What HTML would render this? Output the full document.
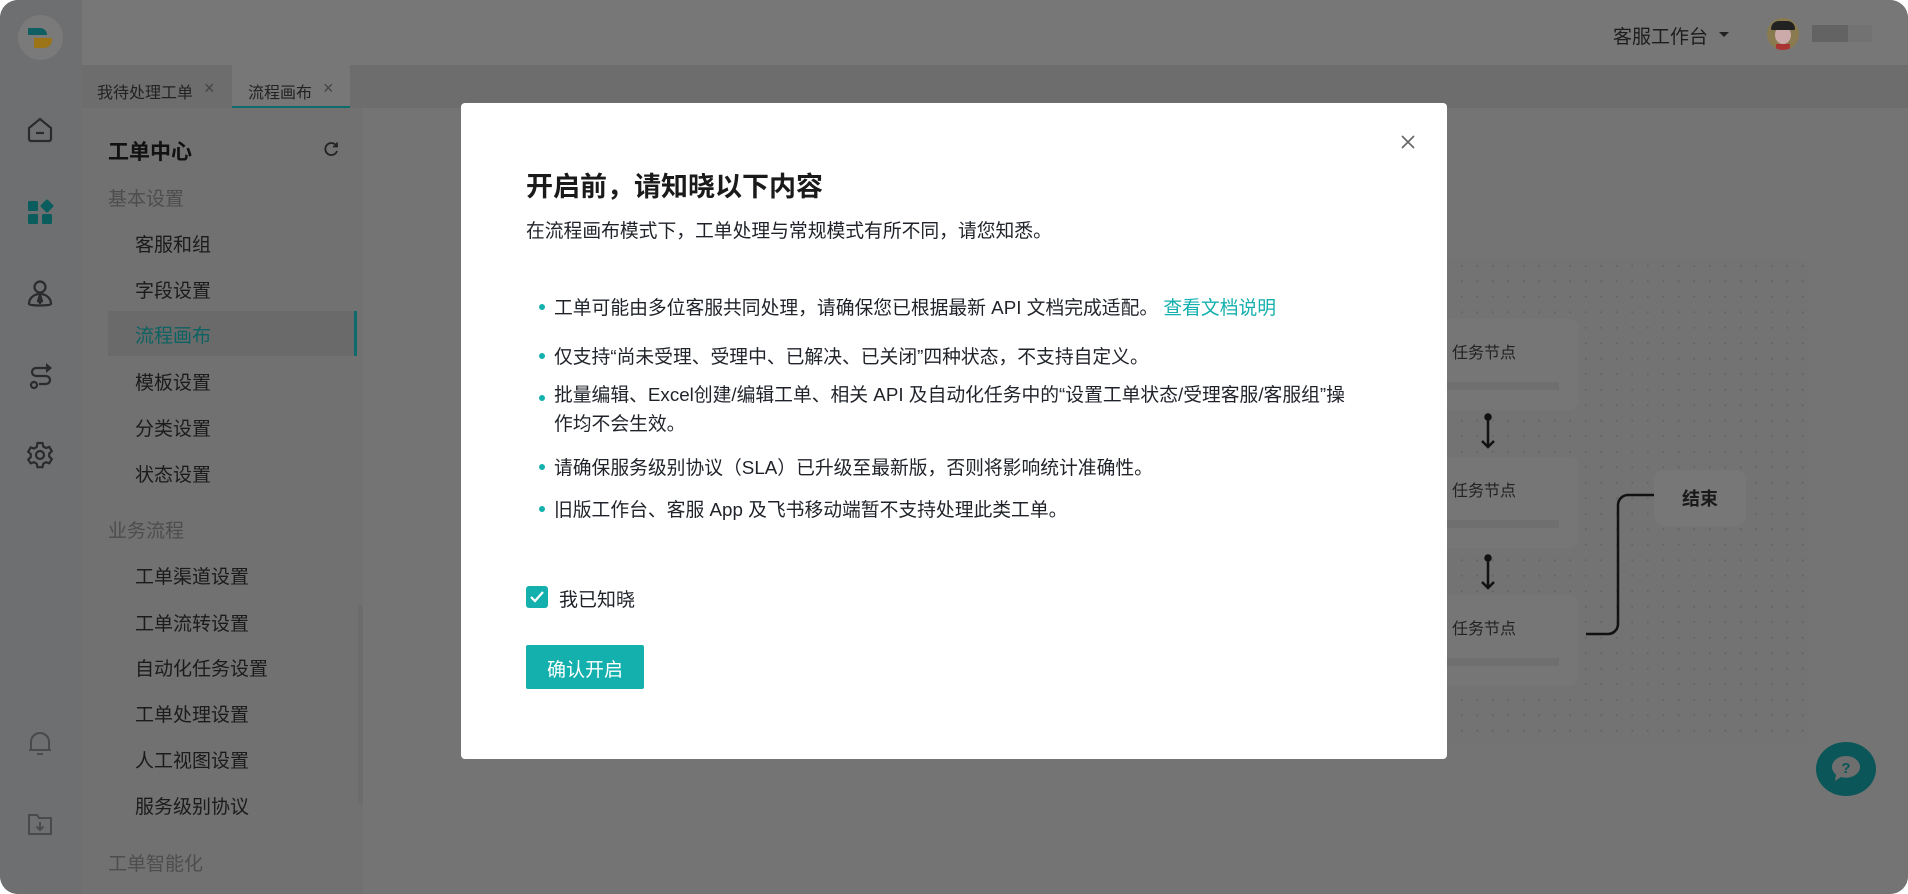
<!DOCTYPE html>
<html><head><meta charset="utf-8"><style>
*{margin:0;padding:0;box-sizing:border-box}
body{width:1908px;height:894px;overflow:hidden;background:#fff;font-family:"Liberation Sans","Noto Sans CJK SC",sans-serif;position:relative}
.wrap{position:absolute;inset:0;border-radius:18px;overflow:hidden;background:#747474}
.abs{position:absolute}
.rail{left:0;top:0;width:82px;height:894px;background:#6e6f71}
.header{left:82px;top:0;right:0;height:65px;background:#777}
.tabs{left:82px;top:65px;right:0;height:43px;background:#6d6d6d}
.menu{left:82px;top:108px;width:281px;height:786px;background:#717171}
.content{left:363px;top:108px;right:0;bottom:0;background:#747474}
.t{position:absolute;white-space:nowrap;color:#1a1a1a}
.mi{font-size:19px;left:135px;color:#1b1b1b}
.mg{font-size:19px;left:108px;color:#4d4d4d}
.canvas{left:1330px;top:258px;width:479px;height:487px;border-radius:14px;background-color:#737373;background-image:radial-gradient(circle,#656565 0.9px,transparent 1.2px);background-size:15.5px 15.5px}
.node{position:absolute;left:1330px;width:249px;height:91px;background:#767676;border-radius:10px}
.node .bar{position:absolute;left:0;right:20px;top:63px;height:8px;background:#6f6f6f}
.node span{position:absolute;left:122px;top:20px;font-size:16px;color:#222}
.modal{left:461px;top:103px;width:986px;height:656px;background:#fff;border-radius:4px}
.m{position:absolute;white-space:nowrap;color:#1f2329}
.li{font-size:18.8px;left:93px}
.dot{position:absolute;left:78px;width:6px;height:6px;border-radius:50%;background:#14b0ae}
</style></head><body><div class="wrap">
<div class="abs rail"></div>
<div class="abs header"></div>
<div class="abs tabs"></div>
<div class="abs menu"></div>
<div class="abs content"></div>

<div class="abs" style="left:18px;top:15px;width:45px;height:45px;border-radius:50%;background:#7a7a7a"></div>
<svg class="abs" style="left:26px;top:25px" width="28" height="26" viewBox="0 0 28 26"><path d="M2 3h12a7 7 0 0 1 7 7H2z" fill="#0f5f62"/><path d="M8 13h18v2a8 8 0 0 1-8 8H8z" fill="#9a7416"/></svg>
<svg class="abs" style="left:26px;top:116px" width="28" height="28" viewBox="0 0 28 28" fill="none" stroke="#2b2b2b" stroke-width="2.2"><path d="M3 12L14 3l11 9v11a2 2 0 0 1-2 2H5a2 2 0 0 1-2-2z"/><path d="M10 17h8"/></svg>
<svg class="abs" style="left:27px;top:199px" width="28" height="28" viewBox="0 0 28 28" fill="#0b5c5d"><rect x="1" y="2" width="10" height="10" rx="1.5"/><rect x="15" y="2" width="10" height="10" rx="1.5" transform="rotate(45 20 7)"/><rect x="1" y="15" width="10" height="10" rx="1.5"/><rect x="15" y="15" width="10" height="10" rx="1.5"/></svg>
<svg class="abs" style="left:26px;top:279px" width="28" height="30" viewBox="0 0 28 30" fill="none" stroke="#2b2b2b" stroke-width="2.2"><circle cx="14" cy="8" r="5.5"/><path d="M3 25c0-6 5-10 11-10s11 4 11 10c0 2-22 2-22 0z"/><path d="M14 16l-2 6 2 2 2-2z" fill="#2b2b2b"/></svg>
<svg class="abs" style="left:27px;top:361px" width="28" height="30" viewBox="0 0 28 30" fill="none" stroke="#2b2b2b" stroke-width="2.2"><path d="M20 7H9a4 4 0 0 0 0 8h10a4 4 0 0 1 0 8H12"/><circle cx="7" cy="24" r="3"/><path d="M19 2l6 5-6 5z" fill="#2b2b2b" stroke="none"/></svg>
<svg class="abs" style="left:26px;top:441px" width="28" height="28" viewBox="0 0 28 28" fill="none" stroke="#2b2b2b" stroke-width="2.2"><path d="M11.5 2h5l.8 3.5 2.6 1.5 3.4-1.1 2.5 4.3-2.6 2.4v3l2.6 2.4-2.5 4.3-3.4-1.1-2.6 1.5-.8 3.5h-5l-.8-3.5-2.6-1.5-3.4 1.1L2.2 18.5l2.6-2.4v-3L2.2 10.7l2.5-4.3 3.4 1.1 2.6-1.5z"/><circle cx="14" cy="14" r="4"/></svg>
<svg class="abs" style="left:27px;top:730px" width="26" height="28" viewBox="0 0 26 28" fill="none" stroke="#4a4a4a" stroke-width="2"><path d="M4 20V12a9 9 0 0 1 18 0v8H2h22"/><path d="M10 24h6"/></svg>
<svg class="abs" style="left:27px;top:811px" width="26" height="26" viewBox="0 0 26 26" fill="none" stroke="#4a4a4a" stroke-width="2"><path d="M2 4h8l2 3h12v16H2z"/><path d="M13 11v8M9.5 15.5L13 19l3.5-3.5"/></svg>

<div class="t" style="left:1613px;top:22px;font-size:19px;color:#1d1d1d">客服工作台</div>
<div class="abs" style="left:1719px;top:32px;border:5px solid transparent;border-top:5px solid #222"></div>
<div class="abs" style="left:1767px;top:18px;width:32px;height:32px;border-radius:50%;background:#8a7a50;overflow:hidden"><div style="position:absolute;left:8px;top:8px;width:16px;height:18px;border-radius:50%;background:#caa;"></div><div style="position:absolute;left:4px;top:3px;width:24px;height:9px;border-radius:12px 12px 2px 2px;background:#222"></div><div style="position:absolute;left:9px;top:26px;width:14px;height:8px;background:#a33"></div></div>
<div class="abs" style="left:1812px;top:25px;width:36px;height:17px;background:#636363"></div>
<div class="abs" style="left:1848px;top:25px;width:24px;height:17px;background:#727272"></div>

<div class="t" style="left:97px;top:79px;font-size:16px;color:#222">我待处理工单</div>
<div class="t" style="left:204px;top:78px;font-size:18px;color:#444">×</div>
<div class="abs" style="left:232px;top:65px;width:118px;height:43px;background:#777;border-bottom:2px solid #0d6b6c"></div>
<div class="t" style="left:248px;top:79px;font-size:16px;color:#222">流程画布</div>
<div class="t" style="left:323px;top:78px;font-size:18px;color:#444">×</div>

<div class="t" style="left:108px;top:136px;font-size:21px;font-weight:bold;color:#111">工单中心</div>
<svg class="abs" style="left:323px;top:141px" width="16" height="16" viewBox="0 0 16 16" fill="none" stroke="#222" stroke-width="1.8"><path d="M13.5 5A6 6 0 1 0 14 10"/><path d="M14 1.5V5.5H10" /></svg>
<div class="t mg" style="top:184px">基本设置</div>
<div class="t mi" style="top:230px">客服和组</div>
<div class="t mi" style="top:276px">字段设置</div>
<div class="abs" style="left:108px;top:311px;width:249px;height:45px;background:#6a6a6a;border-right:3px solid #0d6b6c"></div>
<div class="t mi" style="top:321px;color:#0d6263">流程画布</div>
<div class="t mi" style="top:368px">模板设置</div>
<div class="t mi" style="top:414px">分类设置</div>
<div class="t mi" style="top:460px">状态设置</div>
<div class="t mg" style="top:516px">业务流程</div>
<div class="t mi" style="top:562px">工单渠道设置</div>
<div class="t mi" style="top:609px">工单流转设置</div>
<div class="t mi" style="top:654px">自动化任务设置</div>
<div class="t mi" style="top:700px">工单处理设置</div>
<div class="t mi" style="top:746px">人工视图设置</div>
<div class="t mi" style="top:792px">服务级别协议</div>
<div class="t mg" style="top:849px">工单智能化</div>
<div class="abs" style="left:358px;top:605px;width:5px;height:200px;background:#6c6c6c;border-radius:3px"></div>

<div class="abs canvas"></div>
<div class="node" style="top:319px"><span>任务节点</span><div class="bar"></div></div>
<div class="node" style="top:457px"><span>任务节点</span><div class="bar"></div></div>
<div class="node" style="top:595px"><span>任务节点</span><div class="bar"></div></div>
<svg class="abs" style="left:1476px;top:410px" width="24" height="200" viewBox="0 0 24 200" fill="none" stroke="#111" stroke-width="2.5"><circle cx="12" cy="7" r="2.5" fill="#111"/><path d="M12 7v30M6 31l6 6 6-6"/><circle cx="12" cy="148" r="2.5" fill="#111"/><path d="M12 148v30M6 172l6 6 6-6"/></svg>
<svg class="abs" style="left:1580px;top:485px" width="80" height="155" viewBox="0 0 80 155" fill="none" stroke="#111" stroke-width="2.5"><path d="M6 149h22a10 10 0 0 0 10-10V20a10 10 0 0 1 10-10h26"/></svg>
<div class="abs" style="left:1654px;top:470px;width:92px;height:56px;background:#777;border-radius:10px"></div>
<div class="t" style="left:1682px;top:485px;font-size:18px;font-weight:bold;color:#1a1a1a">结束</div>
<div class="abs" style="left:1816px;top:742px;width:60px;height:54px;border-radius:50%;background:#0a5658"></div>
<svg class="abs" style="left:1829px;top:753px" width="34" height="32" viewBox="0 0 34 32"><path d="M17 3C9 3 3 8 3 14c0 3 1.5 5.5 4 7.5L6 28l6-4c1.6.5 3.2.7 5 .7 8 0 14-5 14-10.7S25 3 17 3z" fill="#6e6e6e"/><text x="17" y="20" text-anchor="middle" font-size="15" font-weight="bold" fill="#0a5658" font-family="Liberation Sans">?</text></svg>

<div class="abs modal">
  <svg class="abs" style="left:939px;top:31px" width="16" height="16" viewBox="0 0 16 16" stroke="#666" stroke-width="1.6"><path d="M2 2l12 12M14 2L2 14"/></svg>
  <div class="m" style="left:65px;top:62px;font-size:27px;font-weight:bold;color:#1a1a1a">开启前，请知晓以下内容</div>
  <div class="m" style="left:65px;top:113px;font-size:18.8px">在流程画布模式下，工单处理与常规模式有所不同，请您知悉。</div>
  <div class="dot" style="top:201px"></div>
  <div class="m li" style="top:190px">工单可能由多位客服共同处理，请确保您已根据最新 API 文档完成适配。 <span style="color:#14b0ae">查看文档说明</span></div>
  <div class="dot" style="top:250px"></div>
  <div class="m li" style="top:239px">仅支持“尚未受理、受理中、已解决、已关闭”四种状态，不支持自定义。</div>
  <div class="dot" style="top:292px"></div>
  <div class="m li" style="top:281px;line-height:29px;margin-top:-4px">批量编辑、Excel创建/编辑工单、相关 API 及自动化任务中的“设置工单状态/受理客服/客服组”操<br>作均不会生效。</div>
  <div class="dot" style="top:361px"></div>
  <div class="m li" style="top:350px">请确保服务级别协议（SLA）已升级至最新版，否则将影响统计准确性。</div>
  <div class="dot" style="top:403px"></div>
  <div class="m li" style="top:392px">旧版工作台、客服 App 及飞书移动端暂不支持处理此类工单。</div>
  <div class="abs" style="left:65px;top:483px;width:22px;height:22px;border-radius:3px;background:#14b0ae"></div>
  <svg class="abs" style="left:68px;top:487px" width="16" height="14" viewBox="0 0 16 14" fill="none" stroke="#fff" stroke-width="2.2"><path d="M2 7l4 4 8-9"/></svg>
  <div class="m" style="left:98px;top:482px;font-size:19px">我已知晓</div>
  <div class="abs" style="left:65px;top:542px;width:118px;height:44px;border-radius:2px;background:#14b0ae"></div>
  <div class="m" style="left:86px;top:552px;font-size:19px;color:#fff">确认开启</div>
</div>
</div></body></html>
